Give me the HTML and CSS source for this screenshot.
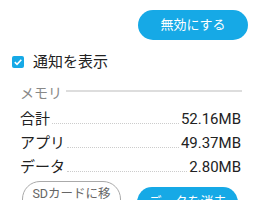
FILE: index.html
```html
<html>
  <head>
    <title>アプリ情報</title>
    <link rel="stylesheet" href="styles.css">
  </head>
  <body>
    <div class="screen">
      <div class="top_actions">
        <button class="pill pill_filled pill_wide">無効にする</button>
      </div>
      <label class="notify">
        <span class="check_box">
          <svg width="10" height="10" viewBox="0 0 10 10"><path d="M1.8 5.2 L4 7.3 L8.3 2.8" fill="none" stroke="#fff" stroke-width="1.6"/></svg>
        </span>
        <span class="notify_label">通知を表示</span>
      </label>
      <div class="section_head">
        <span class="section_title">メモリ</span>
        <span class="section_rule"></span>
      </div>
      <div class="mem_row"><span class="mem_name">合計</span><span class="mem_dots"></span><span class="mem_value">52.16MB</span></div>
      <div class="mem_row"><span class="mem_name">アプリ</span><span class="mem_dots"></span><span class="mem_value">49.37MB</span></div>
      <div class="mem_row"><span class="mem_name">データ</span><span class="mem_dots"></span><span class="mem_value">2.80MB</span></div>
      <div class="bottom_actions">
        <div class="pill pill_outline">SDカードに移<br>動</div>
        <div class="pill pill_filled">データを消去</div>
      </div>
    </div>
  </body>
</html>
```

FILE: styles.css
```css
body {
  margin: 0px;
  padding: 0px;
  background-color: #FFF;
  font-family: Roboto, "Noto Sans CJK JP", sans-serif;
  color: #222;
}
.screen {
  width: 258px;
  height: 200px;
  overflow: hidden;
}
.top_actions {
  display: flex;
  justify-content: flex-end;
  padding-top: 10px;
  padding-right: 10px;
}
.pill {
  box-sizing: border-box;
  font-family: Roboto, "Noto Sans CJK JP", sans-serif;
  font-size: 13px;
  height: 30px;
  line-height: 30px;
  border-radius: 15px;
  padding: 0px;
  text-align: center;
  white-space: nowrap;
  overflow: hidden;
  flex: none;
}
.pill_filled {
  background-color: #16A9E6;
  border: none;
  color: #FFF;
  width: 101px;
}
.pill_wide {
  width: 110px;
}
.pill_outline {
  background-color: #FFF;
  border: 1px solid #AAA;
  color: #666;
  width: 99px;
  height: 44px;
  font-size: 12.5px;
  line-height: 16px;
  padding-top: 4px;
  border-radius: 18px;
}
.notify {
  display: flex;
  align-items: center;
  margin-top: 13px;
  padding-left: 12px;
}
.check_box {
  width: 12px;
  height: 12px;
  border-radius: 2px;
  background-color: #16A9E6;
  display: flex;
  align-items: center;
  justify-content: center;
}
.notify_label {
  font-size: 15px;
  margin-left: 9px;
  line-height: 18px;
}
.section_head {
  display: flex;
  align-items: center;
  margin-top: 11px;
  padding-left: 20px;
  padding-right: 16px;
  height: 20px;
}
.section_title {
  font-size: 14px;
  color: #888;
}
.section_rule {
  flex: 1;
  height: 2px;
  background-color: #DDD;
  margin-left: 4px;
  margin-bottom: 2px;
}
.mem_row {
  display: flex;
  align-items: baseline;
  padding-left: 20px;
  padding-right: 17px;
  height: 24px;
  font-size: 15px;
  line-height: 24px;
}
.section_head + .mem_row {
  margin-top: 5px;
}
.mem_dots {
  flex: 1;
  border-bottom: 1px dotted #CCC;
  margin-left: 2px;
  margin-right: 2px;
}
.bottom_actions {
  display: flex;
  align-items: flex-start;
  gap: 16px;
  padding-left: 22px;
  margin-top: 2px;
}
.bottom_actions .pill_filled {
  margin-top: 6px;
}
```
